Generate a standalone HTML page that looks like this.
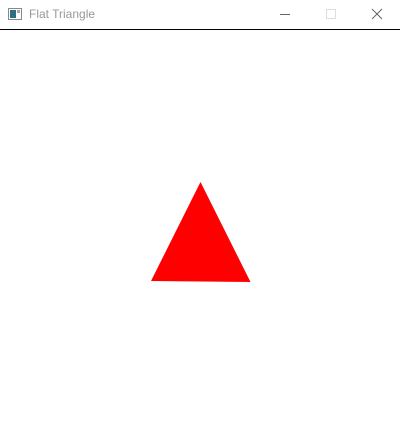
<!DOCTYPE html>
<html><head><style>
body{margin:0;width:400px;height:429px;background:#fff;overflow:hidden;font-family:"Liberation Sans",sans-serif;position:relative}
.tb{position:absolute;left:0;top:0;width:400px;height:29px;background:#fff;border-bottom:1px solid #000}
.t{position:absolute;left:29px;top:7px;font-size:12px;color:#999}
</style></head><body>
<div class="tb">
<svg style="position:absolute;left:8px;top:8px" width="14" height="12"><rect x="0.5" y="0.5" width="13" height="11" fill="#fff" stroke="#888"/><rect x="2" y="2" width="6" height="8" fill="#2f6f80"/><rect x="9" y="2" width="3" height="3" fill="#9ab"/></svg>
<div class="t">Flat Triangle</div>
<svg style="position:absolute;left:280px;top:8px" width="110" height="14">
<line x1="0" y1="6.5" x2="10" y2="6.5" stroke="#666"/>
<rect x="46.5" y="1.5" width="9" height="9" fill="none" stroke="#ddd"/>
<line x1="92" y1="1" x2="102" y2="11" stroke="#666"/><line x1="102" y1="1" x2="92" y2="11" stroke="#666"/>
</svg>
</div>
<svg style="position:absolute;left:0;top:0" width="400" height="429"><polygon points="200.5,182 151,281 250.5,282" fill="#f00"/></svg>
</body></html>
